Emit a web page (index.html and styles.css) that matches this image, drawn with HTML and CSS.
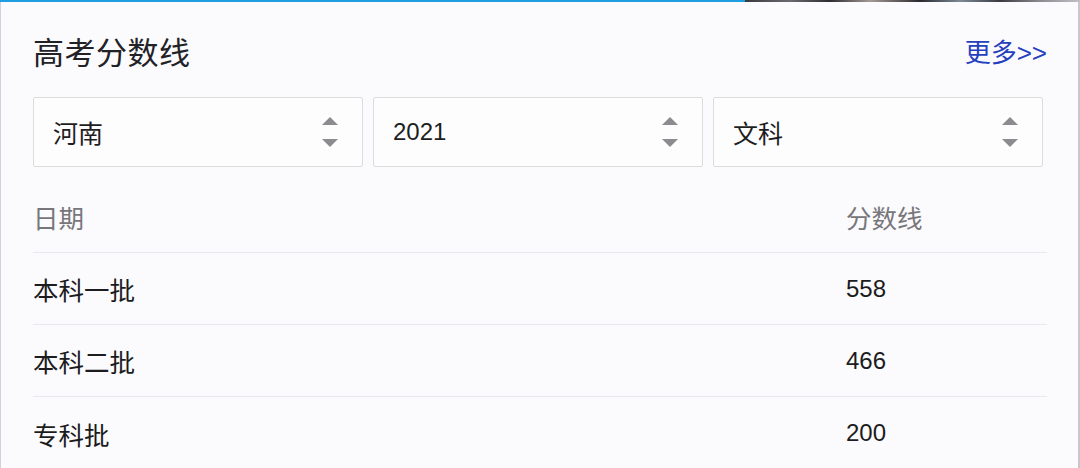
FILE: index.html
```html
<!DOCTYPE html>
<html lang="zh-CN">
<head>
<meta charset="utf-8">
<title>高考分数线</title>
<link rel="stylesheet" href="styles.css">
</head>
<body>
<div class="card">
  <div class="top-strip"></div>
  <div class="card-head">
    <h2 class="card-title">高考分数线</h2>
    <a class="more-link" href="#">更多&gt;&gt;</a>
  </div>
  <div class="filters">
    <div class="picker">
      <span class="picker-value cjk">河南</span>
      <span class="spinner"><i class="tri tri-up"></i><i class="tri tri-down"></i></span>
    </div>
    <div class="picker">
      <span class="picker-value">2021</span>
      <span class="spinner"><i class="tri tri-up"></i><i class="tri tri-down"></i></span>
    </div>
    <div class="picker">
      <span class="picker-value cjk">文科</span>
      <span class="spinner"><i class="tri tri-up"></i><i class="tri tri-down"></i></span>
    </div>
  </div>
  <div class="score-table">
    <div class="score-row score-row--head">
      <span class="cjk">日期</span>
      <span class="cjk">分数线</span>
    </div>
    <div class="score-row">
      <span class="cjk">本科一批</span>
      <span>558</span>
    </div>
    <div class="score-row">
      <span class="cjk">本科二批</span>
      <span>466</span>
    </div>
    <div class="score-row score-row--last">
      <span class="cjk">专科批</span>
      <span>200</span>
    </div>
  </div>
</div>
</body>
</html>
```
FILE: styles.css
```css
html, body {
  margin: 0;
  padding: 0;
  background: #fbfafd;
}

body {
  width: 1080px;
  height: 468px;
  overflow: hidden;
  font-family: "Liberation Sans", "Noto Sans CJK SC", sans-serif;
}

.card {
  box-sizing: border-box;
  width: 1080px;
  height: 468px;
  background: #fbfafd;
  border-left: 1px solid #cdd2de;
  border-right: 2px solid #c6c6cc;
  padding: 0 31px 0 32px;
  position: relative;
}

/* accent bar along the top edge, followed by the banner above it */
.top-strip {
  position: absolute;
  left: -1px;
  top: 0;
  width: 1080px;
  height: 2px;
  background: linear-gradient(90deg,
    #1e9ee0 0, #1e9ee0 745px,
    #3a3a3e 745px, #6c6a70 790px, #2d2c30 830px, #a49a94 870px,
    #2a2a2e 920px, #7a8a96 960px, #3a3a40 1000px, #8c8c90 1040px, #c0c0c6 1080px);
}

.card-head {
  display: flex;
  align-items: center;
  justify-content: space-between;
  box-sizing: border-box;
  height: 97px;
  padding-top: 4px;
}

.card-title {
  margin: 0;
  font-size: 31px;
  font-weight: normal;
  color: #222226;
  letter-spacing: 0.5px;
}

.more-link {
  font-size: 26px;
  color: #2540bd;
  text-decoration: none;
}

.filters {
  display: grid;
  grid-template-columns: repeat(3, 330px);
  column-gap: 10px;
}

.picker {
  box-sizing: border-box;
  height: 70px;
  border: 1px solid #dcdcdf;
  border-radius: 2px;
  background: #fdfdfe;
  display: flex;
  align-items: center;
  justify-content: space-between;
  padding: 0 24px 0 19px;
}

.picker-value {
  font-size: 24px;
  color: #1e1e22;
}

.picker-value.cjk {
  font-size: 25px;
}

.spinner {
  display: flex;
  flex-direction: column;
  gap: 14px;
}

.tri {
  display: block;
  width: 0;
  height: 0;
  border-left: 8.5px solid transparent;
  border-right: 8.5px solid transparent;
}

.tri-up {
  border-bottom: 8px solid #8c8c90;
}

.tri-down {
  border-top: 8px solid #8c8c90;
}

.score-table {
  margin-top: 14px;
  width: 1014px;
}

.score-row {
  display: grid;
  grid-template-columns: 1fr 201px;
  align-items: center;
  height: 72px;
  box-sizing: border-box;
  border-bottom: 1px solid #e9e8ee;
  font-size: 24px;
  color: #1c1c20;
}

.score-row .cjk {
  font-size: 25.5px;
}

.score-row--head {
  color: #77777b;
}

.score-row--last {
  border-bottom: none;
}
```
